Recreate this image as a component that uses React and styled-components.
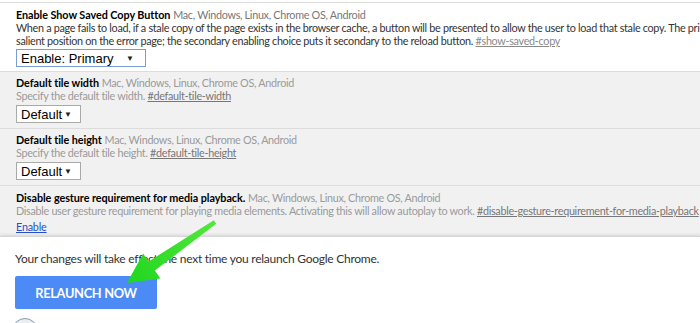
import React from "react";
import styled, { createGlobalStyle } from "styled-components";

const Global = createGlobalStyle`
  html, body { margin: 0; padding: 0; background: #fff; }
  body { width: 700px; height: 323px; overflow: hidden; position: relative;
    font-family: Lato, "Noto Sans", sans-serif; }
`;

const Page = styled.div`
  width: 700px;
  height: 323px;
  display: flex;
  flex-direction: column;
  position: relative;
  overflow: hidden;
`;

const List = styled.div`
  padding-top: 2px;
  display: flex;
  flex-direction: column;
  width: 900px;
`;

const Experiment = styled.div`
  background: ${(p) => (p.$active ? "#ffffff" : "#f1f1f1")};
  border-top: 1px solid #dcdcdc;
  padding: ${(p) => p.$pad || "5px 16px 4px"};
  display: flex;
  flex-direction: column;
  align-items: flex-start;
`;

const Title = styled.div`
  font-size: 10.8px;
  line-height: 13px;
  height: 13px;
  white-space: nowrap;
  color: #000;
`;

const Name = styled.span`
  font-weight: 700;
  letter-spacing: -0.05px;
`;

const Platforms = styled.span`
  letter-spacing: -0.3px;
  color: ${(p) => (p.$active ? "#777" : "#9a9a9a")};
`;

const Desc = styled.div`
  font-size: 10.8px;
  line-height: 13px;
  white-space: nowrap;
  letter-spacing: -0.3px;
  color: ${(p) => (p.$active ? "#333" : "#9a9a9a")};
`;

const Anchor = styled.a`
  color: ${(p) => (p.$active ? "#8a8a8a" : "#777")};
  text-decoration: underline;
`;

const SelectBox = styled.div`
  margin-top: ${(p) => p.$mt || 2}px;
  width: ${(p) => p.$w}px;
  height: 18px;
  box-sizing: border-box;
  border: 1px solid ${(p) => (p.$focus ? "#7a9cd3" : "#a9a9a9")};
  background: #fff;
  display: flex;
  align-items: center;
  justify-content: space-between;
  padding: 0 ${(p) => p.$pr || 8}px 0 4px;
  font-family: "Liberation Sans", Arial, sans-serif;
  font-size: 13px;
  color: #000;
`;

const Caret = styled.span`
  font-size: 8px;
  color: #222;
`;

const EnableLink = styled.a`
  margin-top: 3px;
  font-size: 10.8px;
  line-height: 14px;
  letter-spacing: -0.2px;
  color: #2a4fc4;
  text-decoration: underline;
`;

const Footer = styled.div`
  flex: 1;
  background: #fff;
  border-top: 1px solid #d6d6d6;
  box-shadow: 0 -1px 3px rgba(0, 0, 0, 0.12);
  padding: 14px 15px 0;
  display: flex;
  flex-direction: column;
  align-items: flex-start;
  position: relative;
`;

const Notice = styled.div`
  font-size: 12px;
  line-height: 16px;
  letter-spacing: -0.25px;
  color: #333;
`;

const RelaunchButton = styled.button`
  margin-top: 9px;
  width: 142px;
  height: 33px;
  border: none;
  border-radius: 2px;
  background: #4c8bf5;
  color: #fff;
  font-family: Lato, "Noto Sans", sans-serif;
  font-weight: 700;
  font-size: 12.8px;
  letter-spacing: -0.3px;
`;

const ResetIcon = styled.div`
  margin-top: 9px;
  margin-left: -3px;
  width: 26px;
  height: 26px;
  box-sizing: border-box;
  border-radius: 50%;
  border: 1px solid #8a9aa8;
  background: #e9eef2;
`;

const Overlay = styled.svg`
  position: absolute;
  left: 0;
  top: 0;
  width: 700px;
  height: 323px;
  pointer-events: none;
`;

export default function App() {
  return (
    <Page>
      <Global />
      <List>
        <Experiment $active $pad="5px 16px 4px">
          <Title>
            <Name>Enable Show Saved Copy Button</Name>{" "}
            <Platforms $active>Mac, Windows, Linux, Chrome OS, Android</Platforms>
          </Title>
          <Desc $active>
            When a page fails to load, if a stale copy of the page exists in the browser cache, a button will be presented to allow the user to load that stale copy. The primary enabling choice puts the button in the most
          </Desc>
          <Desc $active>
            salient position on the error page; the secondary enabling choice puts it secondary to the reload button.{" "}
            <Anchor $active>#show-saved-copy</Anchor>
          </Desc>
          <SelectBox $w={130} $pr={11} $focus>
            <span>Enable: Primary</span>
            <Caret>▼</Caret>
          </SelectBox>
        </Experiment>
        <Experiment $pad="4px 16px 5px">
          <Title>
            <Name>Default tile width</Name>{" "}
            <Platforms>Mac, Windows, Linux, Chrome OS, Android</Platforms>
          </Title>
          <Desc>
            Specify the default tile width. <Anchor>#default-tile-width</Anchor>
          </Desc>
          <SelectBox $w={65} $mt={3}>
            <span>Default</span>
            <Caret>▼</Caret>
          </SelectBox>
        </Experiment>
        <Experiment $pad="4px 16px 5px">
          <Title>
            <Name>Default tile height</Name>{" "}
            <Platforms>Mac, Windows, Linux, Chrome OS, Android</Platforms>
          </Title>
          <Desc>
            Specify the default tile height. <Anchor>#default-tile-height</Anchor>
          </Desc>
          <SelectBox $w={65} $mt={3}>
            <span>Default</span>
            <Caret>▼</Caret>
          </SelectBox>
        </Experiment>
        <Experiment $pad="5px 16px 2px">
          <Title>
            <Name>Disable gesture requirement for media playback.</Name>{" "}
            <Platforms>Mac, Windows, Linux, Chrome OS, Android</Platforms>
          </Title>
          <Desc>
            Disable user gesture requirement for playing media elements. Activating this will allow autoplay to work.{" "}
            <Anchor>#disable-gesture-requirement-for-media-playback</Anchor>
          </Desc>
          <EnableLink>Enable</EnableLink>
        </Experiment>
      </List>
      <Footer>
        <Notice>Your changes will take effect the next time you relaunch Google Chrome.</Notice>
        <RelaunchButton>RELAUNCH NOW</RelaunchButton>
        <ResetIcon />
      </Footer>
      <Overlay viewBox="0 0 700 323">
        <defs>
          <linearGradient id="g" x1="215" y1="222" x2="127" y2="283" gradientUnits="userSpaceOnUse">
            <stop offset="0" stopColor="#52e83a" />
            <stop offset="1" stopColor="#1fd61f" />
          </linearGradient>
        </defs>
        <polygon
          points="216.2,223.8 154.8,270.6 160.4,278.4 127,283 143.1,253.6 148.7,261.4 213.8,220.2"
          fill="url(#g)"
        />
      </Overlay>
    </Page>
  );
}
